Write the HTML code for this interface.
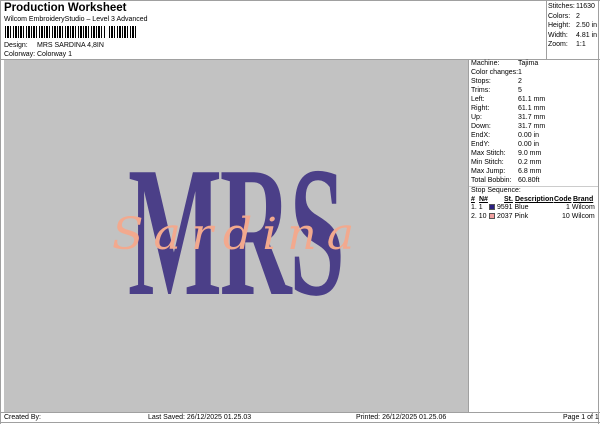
<!DOCTYPE html>
<html><head><style>
body{margin:0;width:600px;height:424px;background:#fff;position:relative;overflow:hidden;font-family:"Liberation Sans",Arial,sans-serif;color:#000}
.a{position:absolute;white-space:nowrap;font-size:7px;line-height:9px}
.l{position:absolute;background:#a0a0a0}
</style></head><body>
<div class="a" style="left:4px;top:1px;font-size:11.5px;line-height:14px;font-weight:bold">Production Worksheet</div>
<div class="a" style="left:4px;top:15px">Wilcom EmbroideryStudio – Level 3 Advanced</div>
<div style="position:absolute;left:5px;top:26px;width:132px;height:12px;background:repeating-linear-gradient(90deg,#000 0 1px,#fff 1px 2px,#000 2px 4px,#fff 4px 5px,#000 5px 6px,#fff 6px 8px,#000 8px 9px,#fff 9px 10px,#000 10px 12px,#fff 12px 13px)"></div>
<div style="position:absolute;left:105px;top:26px;width:4px;height:12px;background:#fff"></div>
<div class="a" style="left:4px;top:41px">Design:</div><div class="a" style="left:37px;top:41px">MRS SARDINA 4,8IN</div>
<div class="a" style="left:4px;top:50px">Colorway:</div><div class="a" style="left:37px;top:50px">Colorway 1</div>
<div class="l" style="left:0;top:0;width:1px;height:424px"></div>
<div class="l" style="left:598px;top:0;width:1px;height:424px"></div>
<div class="l" style="left:0;top:0;width:600px;height:1px"></div>
<div class="l" style="left:546px;top:0;width:1px;height:59px"></div>
<div class="l" style="left:0;top:59px;width:600px;height:1px"></div>
<div style="position:absolute;left:4px;top:60px;width:464px;height:352px;background:#c2c2c2"></div>
<div class="l" style="left:468px;top:60px;width:1px;height:352px"></div>
<div class="l" style="left:0;top:412px;width:600px;height:1px"></div>
<div class="l" style="left:0;top:422px;width:600px;height:1px"></div>
<div class="a" style="left:548px;top:2px;line-height:9.5px">Stitches:<br>Colors:<br>Height:<br>Width:<br>Zoom:</div>
<div class="a" style="left:576px;top:2px;line-height:9.5px">11630<br>2<br>2.50 in<br>4.81 in<br>1:1</div>
<div class="a" style="left:471px;top:59px">Machine:<br>Color changes:<br>Stops:<br>Trims:<br>Left:<br>Right:<br>Up:<br>Down:<br>EndX:<br>EndY:<br>Max Stitch:<br>Min Stitch:<br>Max Jump:<br>Total Bobbin:</div>
<div class="a" style="left:518px;top:59px">Tajima<br>1<br>2<br>5<br>61.1 mm<br>61.1 mm<br>31.7 mm<br>31.7 mm<br>0.00 in<br>0.00 in<br>9.0 mm<br>0.2 mm<br>6.8 mm<br>60.80ft</div>
<div class="l" style="left:469px;top:186px;width:129px;height:1px;background:#ccc"></div>
<div class="a" style="left:471px;top:186px">Stop Sequence:</div>
<div class="a" style="left:471px;top:195px;font-weight:bold;text-decoration:underline">#</div>
<div class="a" style="left:479px;top:195px;font-weight:bold;text-decoration:underline">N#</div>
<div class="a" style="left:504px;top:195px;font-weight:bold;text-decoration:underline">St.</div>
<div class="a" style="left:515px;top:195px;font-weight:bold;text-decoration:underline">Description</div>
<div class="a" style="left:554px;top:195px;font-weight:bold;text-decoration:underline">Code</div>
<div class="a" style="left:573px;top:195px;font-weight:bold;text-decoration:underline">Brand</div>
<div class="a" style="left:471px;top:203px">1. 1</div><div style="position:absolute;left:489px;top:204px;width:6px;height:6px;background:#2a2080;border:1px solid #555;box-sizing:border-box"></div>
<div class="a" style="left:497px;top:203px">9591 Blue</div><div class="a" style="left:566px;top:203px">1 Wilcom</div>
<div class="a" style="left:471px;top:212px">2. 10</div><div style="position:absolute;left:489px;top:213px;width:6px;height:6px;background:#f0a0a0;border:1px solid #555;box-sizing:border-box"></div>
<div class="a" style="left:497px;top:212px">2037 Pink</div><div class="a" style="left:562px;top:212px">10 Wilcom</div>
<div class="a" style="left:4px;top:413px">Created By:</div>
<div class="a" style="left:148px;top:413px">Last Saved: 26/12/2025 01.25.03</div>
<div class="a" style="left:356px;top:413px">Printed: 26/12/2025 01.25.06</div>
<div class="a" style="left:563px;top:413px">Page 1 of 1</div>
<div style="position:absolute;left:128px;top:139px;width:220px;height:170px;">
<div style="position:absolute;left:0;top:0;font-family:'Liberation Serif',serif;font-weight:bold;font-size:186px;line-height:186px;color:#4b3f88;transform:scaleX(0.535);transform-origin:0 0;letter-spacing:-4px">MRS</div>
</div>
<div class="a" style="left:112px;top:209px;font-family:'DejaVu Serif',serif;font-style:italic;font-size:46px;line-height:50px;color:#f2a98e;letter-spacing:10px;transform:scaleY(0.95);">Sardina</div>
</body></html>
